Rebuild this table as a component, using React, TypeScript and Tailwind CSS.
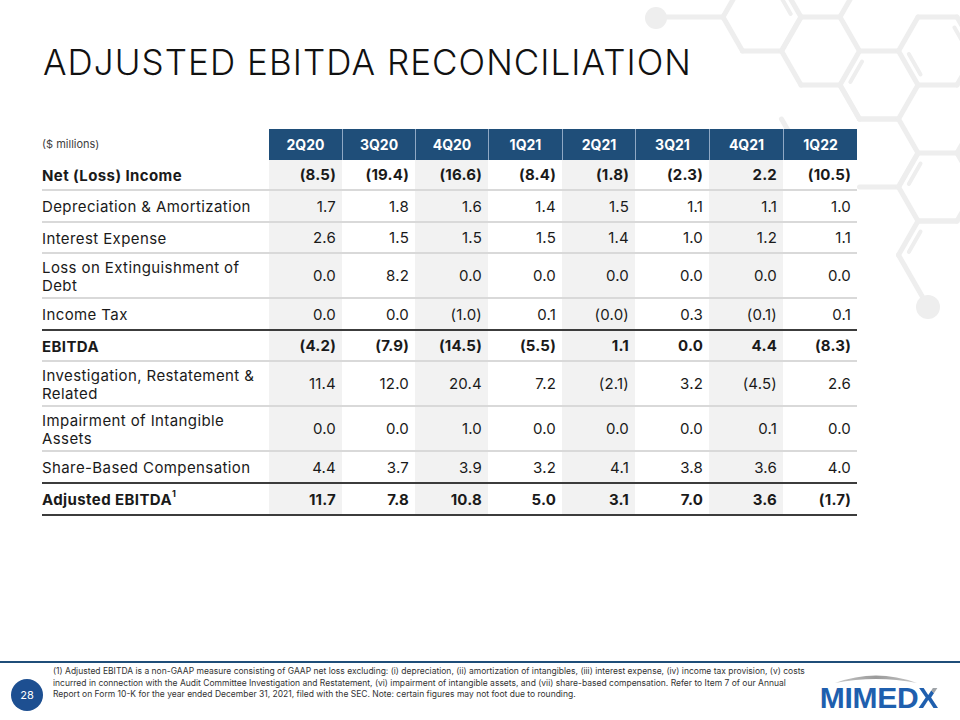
import React from "react";

type Row = {
  label: React.ReactNode;
  values: string[];
  bold?: boolean;
  h: string;
  dark?: boolean;
};

const quarters = ["2Q20", "3Q20", "4Q20", "1Q21", "2Q21", "3Q21", "4Q21", "1Q22"];

const rows: Row[] = [
  { label: "Net (Loss) Income", values: ["(8.5)", "(19.4)", "(16.6)", "(8.4)", "(1.8)", "(2.3)", "2.2", "(10.5)"], bold: true, h: "h-[31px]" },
  { label: "Depreciation & Amortization", values: ["1.7", "1.8", "1.6", "1.4", "1.5", "1.1", "1.1", "1.0"], h: "h-[32px]" },
  { label: "Interest Expense", values: ["2.6", "1.5", "1.5", "1.5", "1.4", "1.0", "1.2", "1.1"], h: "h-[31px]" },
  { label: <>Loss on Extinguishment of<br />Debt</>, values: ["0.0", "8.2", "0.0", "0.0", "0.0", "0.0", "0.0", "0.0"], h: "h-[45px]" },
  { label: "Income Tax", values: ["0.0", "0.0", "(1.0)", "0.1", "(0.0)", "0.3", "(0.1)", "0.1"], h: "h-[32px]", dark: true },
  { label: "EBITDA", values: ["(4.2)", "(7.9)", "(14.5)", "(5.5)", "1.1", "0.0", "4.4", "(8.3)"], bold: true, h: "h-[31px]" },
  { label: <>Investigation, Restatement &amp;<br />Related</>, values: ["11.4", "12.0", "20.4", "7.2", "(2.1)", "3.2", "(4.5)", "2.6"], h: "h-[45px]" },
  { label: <>Impairment of Intangible<br />Assets</>, values: ["0.0", "0.0", "1.0", "0.0", "0.0", "0.0", "0.1", "0.0"], h: "h-[45px]" },
  { label: "Share-Based Compensation", values: ["4.4", "3.7", "3.9", "3.2", "4.1", "3.8", "3.6", "4.0"], h: "h-[32px]", dark: true },
  {
    label: <>Adjusted EBITDA<span className="relative -top-[6px] text-[9px]">1</span></>,
    values: ["11.7", "7.8", "10.8", "5.0", "3.1", "7.0", "3.6", "(1.7)"],
    bold: true,
    h: "h-[32px]",
    dark: true,
  },
];

// hex lattice: flat-top, side 39, half height 34
type P = [number, number];
const S = 39;
const H = 34;
const hx = (cx: number, cy: number): P[] => [
  [cx - S, cy],
  [cx - S / 2, cy - H],
  [cx + S / 2, cy - H],
  [cx + S, cy],
  [cx + S / 2, cy + H],
  [cx - S / 2, cy + H],
];

const edges: [P, P][] = [];
function hexEdges(cx: number, cy: number, which: number[]) {
  const v = hx(cx, cy);
  which.forEach((i) => edges.push([v[i], v[(i + 1) % 6]]));
}
// edge i goes from vertex i to i+1: 0 upper-left, 1 top, 2 upper-right, 3 lower-right, 4 bottom, 5 lower-left
hexEdges(762, 17, [0, 3, 4, 5, 2]);
hexEdges(820.5, 51, [0, 1, 2, 3, 4, 5]);
hexEdges(879, 17, [4]);
edges.push([[840, 17], [859.5, -17]]);
hexEdges(937.5, 51, [0, 1, 2, 3, 4, 5]);
hexEdges(879, 85, [3, 4, 5]);
hexEdges(820.5, 119, [2, 5]);
hexEdges(879, 153, [1, 2, 3, 4]);
hexEdges(937.5, 119, [3, 4]);
hexEdges(937.5, 187, [0, 5, 4, 3, 2]);
hexEdges(937.5, 255, [0, 1]);

const inner = (cx: number, cy: number, i: number) => {
  const v = hx(cx, cy);
  const a = v[i];
  const b = v[(i + 1) % 6];
  const mx = (a[0] + b[0]) / 2;
  const my = (a[1] + b[1]) / 2;
  const ox = (cx - mx) * 0.22;
  const oy = (cy - my) * 0.22;
  const p1: P = [a[0] + (b[0] - a[0]) * 0.2 + ox, a[1] + (b[1] - a[1]) * 0.2 + oy];
  const p2: P = [a[0] + (b[0] - a[0]) * 0.8 + ox, a[1] + (b[1] - a[1]) * 0.8 + oy];
  return [p1, p2] as [P, P];
};
const innerLines: [P, P][] = [
  inner(762, 17, 2),
  inner(879, 85, 0),
  inner(937.5, 51, 5),
  inner(937.5, 51, 2),
  inner(937.5, 187, 0),
  inner(937.5, 255, 0),
];

function Hexes() {
  return (
    <svg className="absolute left-0 top-0 pointer-events-none" width="960" height="720" viewBox="0 0 960 720">
      <g stroke="#eeeeee" strokeWidth="5" strokeLinecap="round" fill="none">
        <line x1="666" y1="17" x2="723" y2="17" />
        {edges.map(([a, b], i) => (
          <line key={i} x1={a[0]} y1={a[1]} x2={b[0]} y2={b[1]} />
        ))}
        {innerLines.map(([a, b], i) => (
          <line key={"i" + i} x1={a[0]} y1={a[1]} x2={b[0]} y2={b[1]} strokeWidth="4" />
        ))}
        <line x1="898.5" y1="255" x2="926" y2="303" />
      </g>
      <circle cx="656" cy="18" r="11" fill="#eeeeee" />
      <circle cx="928" cy="307" r="12" fill="#eeeeee" />
    </svg>
  );
}

function Logo() {
  return (
    <div className="flex flex-col pt-[9px]">
      <svg width="116" height="11" viewBox="0 0 116 11">
        <defs>
          <linearGradient id="arc" x1="0" x2="1" y1="0" y2="0">
            <stop offset="0" stopColor="#c8c8c8" />
            <stop offset="0.5" stopColor="#9a9a9a" />
            <stop offset="1" stopColor="#c8c8c8" />
          </linearGradient>
        </defs>
        <path d="M15,11 Q56,-4 97,11 Q56,3 15,11 Z" fill="url(#arc)" />
      </svg>
      <div className="leading-none text-[30px] font-bold text-[#1f5fae] tracking-[-0.3px] font-['Liberation_Sans',sans-serif]">
        MIMED
        <span className="bg-[linear-gradient(225deg,#9ea3a8_32%,#1f5fae_32%)] bg-clip-text text-transparent">X</span>
      </div>
    </div>
  );
}

export default function App() {
  return (
    <div className="relative w-[960px] h-[720px] overflow-hidden bg-white flex flex-col font-['Inter',sans-serif] text-[#1a1a1a]">
      <Hexes />

      {/* Title */}
      <div className="relative h-[129px] pt-[45px] pl-[43px]">
        <h1 className="text-[35px] leading-none font-light tracking-[0.03em] text-[#111]">
          ADJUSTED EBITDA RECONCILIATION
        </h1>
      </div>

      {/* Table */}
      <div className="relative ml-[42px] w-[815px] bg-white">
        <div className="grid grid-cols-[227px_73px_73px_73px_74px_73px_74px_74px_74px] h-[31px]">
          <div className="flex items-center text-[11px] text-[#404040]">($ millions)</div>
          {quarters.map((q, i) => (
            <div
              key={q}
              className={`flex items-center justify-center bg-[#1f4e79] text-white font-bold text-[14px] ${
                i > 0 ? "border-l border-[#8fa8c4]" : ""
              }`}
            >
              {q}
            </div>
          ))}
        </div>
        {rows.map((r, ri) => (
          <div
            key={ri}
            className={`grid grid-cols-[227px_73px_73px_73px_74px_73px_74px_74px_74px] border-b-2 ${r.h} ${
              r.dark ? "border-[#3c3c3c]" : "border-[#d9d9d9]"
            } ${r.bold ? "font-bold" : ""}`}
          >
            <div className="flex items-center pt-[2px] text-[15px] leading-[18px] tracking-[0.4px] whitespace-nowrap">{r.label}</div>
            {r.values.map((v, i) => (
              <div
                key={i}
                className={`flex items-center justify-end pt-[2px] pr-[6px] text-[15px] tracking-[0.2px] ${i % 2 === 0 ? "bg-[#f2f2f2]" : "bg-white"}`}
              >
                {v}
              </div>
            ))}
          </div>
        ))}
      </div>

      <div className="flex-1" />

      {/* Footer */}
      <div className="relative flex h-[59px] border-t-2 border-[#1f4e79] bg-white">
        <div className="w-[53px] shrink-0 pl-[11px] pt-[16px]">
          <div className="w-[32px] h-[32px] rounded-full bg-[#1d4f91] flex items-center justify-center text-white text-[11px]">
            28
          </div>
        </div>
        <p className="pt-[3px] text-[8.5px] leading-[11.5px] text-[#333] whitespace-nowrap">
          (1) Adjusted EBITDA is a non-GAAP measure consisting of GAAP net loss excluding: (i) depreciation, (ii) amortization of intangibles, (iii) interest expense, (iv) income tax provision, (v) costs
          <br />
          incurred in connection with the Audit Committee Investigation and Restatement, (vi) impairment of intangible assets, and (vii) share-based compensation. Refer to Item 7 of our Annual
          <br />
          Report on Form 10-K for the year ended December 31, 2021, filed with the SEC. Note: certain figures may not foot due to rounding.
        </p>
        <div className="ml-auto pr-[22px]">
          <Logo />
        </div>
      </div>
    </div>
  );
}
